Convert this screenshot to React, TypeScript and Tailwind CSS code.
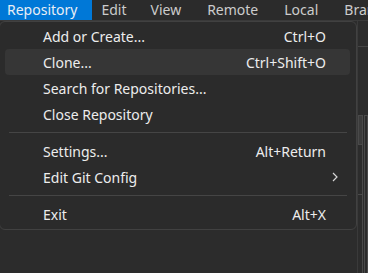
const font = { fontFamily: '"Segoe UI", "Noto Sans", "Liberation Sans", sans-serif' };

const menus = [
  { label: "Repository", cls: "bg-[#0078d7] text-[#e8eef5] pl-[7px] pr-[15px]" },
  { label: "Edit", cls: "text-[#cccccc] pl-[9px] pr-3" },
  { label: "View", cls: "text-[#cccccc] pl-3 pr-[13px]" },
  { label: "Remote", cls: "text-[#cccccc] px-[13px]" },
  { label: "Local", cls: "text-[#cccccc] px-[13px]" },
  { label: "Branch", cls: "text-[#cccccc] px-[13px]" },
];

type Item =
  | { kind: "item"; label: string; shortcut?: string; sub?: boolean; active?: boolean }
  | { kind: "sep" };

const items: Item[] = [
  { kind: "item", label: "Add or Create...", shortcut: "Ctrl+O" },
  { kind: "item", label: "Clone...", shortcut: "Ctrl+Shift+O", active: true },
  { kind: "item", label: "Search for Repositories..." },
  { kind: "item", label: "Close Repository" },
  { kind: "sep" },
  { kind: "item", label: "Settings...", shortcut: "Alt+Return" },
  { kind: "item", label: "Edit Git Config", sub: true },
  { kind: "sep" },
  { kind: "item", label: "Exit", shortcut: "Alt+X" },
];

export default function App() {
  return (
    <div className="relative w-[368px] h-[273px] overflow-hidden bg-[#2c2c2c] text-[14px]" style={font}>
      {/* Menu bar */}
      <div className="flex h-5 bg-[#2b2b2b] border-b border-[#3a3a3a] box-content">
        {menus.map((m) => (
          <div key={m.label} className={`flex items-center h-5 leading-5 whitespace-nowrap shrink-0 ${m.cls}`}>
            {m.label}
          </div>
        ))}
      </div>

      {/* Background panels */}
      <div className="flex h-[252px]">
        <div className="flex-1" />
        <div className="w-[11px] flex flex-col border-l border-[#3a3a3a]">
          <div className="h-[26px] border-b border-[#444]" />
          <div className="h-[68px]" />
          <div className="flex flex-1">
            <div className="w-[6px] flex flex-col">
              <div className="h-[30px] bg-[#3c3c3c] border border-[#4a4a4a]" />
              <div className="h-[50px] border-r border-[#4a4a4a] border-b" />
              <div className="flex-1 border-r border-[#4a4a4a]" />
            </div>
            <div className="w-px" />
            <div className="w-[4px] border-x border-[#4a4a4a] border-t" />
          </div>
        </div>
      </div>

      {/* Dropdown */}
      <div className="absolute left-[-1px] top-[21px] w-[358px] rounded-md border border-[#414141] bg-[#2b2b2b] pt-px pb-[2px]">
        {items.map((it, i) =>
          it.kind === "sep" ? (
            <div key={i} className="h-[11px] flex items-center px-[9px]">
              <div className="h-px w-full bg-[#454545]" />
            </div>
          ) : (
            <div
              key={i}
              className={`flex items-center h-[26px] ml-[5px] mr-[6px] rounded-[4px] ${
                it.active ? "bg-[#363636]" : ""
              }`}
            >
              <span className="pl-[38px] text-[#ededed] whitespace-nowrap">{it.label}</span>
              {it.sub ? (
                <svg className="ml-auto mr-[12px]" width="6" height="10" viewBox="0 0 6 10" fill="none">
                  <polyline points="1,1 5,5 1,9" stroke="#d6d6d6" strokeWidth="1.2" />
                </svg>
              ) : (
                <span className="ml-auto pr-[24px] text-[#ededed] whitespace-nowrap">{it.shortcut}</span>
              )}
            </div>
          )
        )}
      </div>
    </div>
  );
}
